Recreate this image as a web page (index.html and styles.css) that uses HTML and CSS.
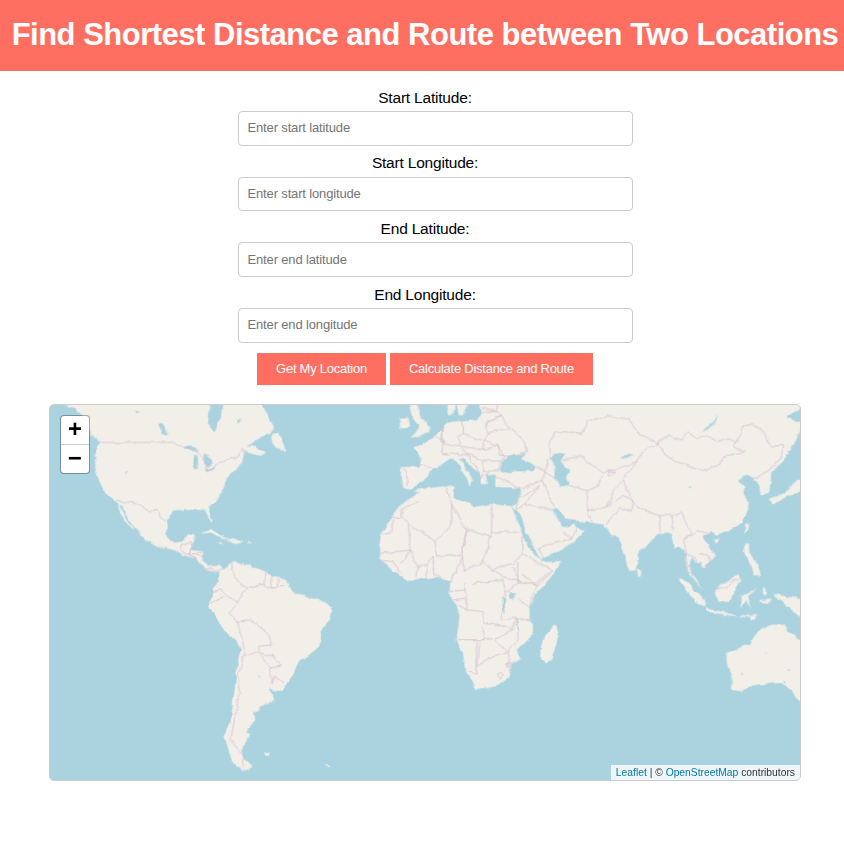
FILE: index.html
```html
<!DOCTYPE html>
<html lang="en">
<head>
<meta charset="utf-8">
<title>Find Shortest Distance and Route</title>
<link rel="stylesheet" href="styles.css">
</head>
<body>
<div class="page">
  <header class="banner"><h1>Find Shortest Distance and Route between Two Locations</h1></header>
  <form class="form">
    <label class="label" for="a">Start Latitude:</label>
    <input class="field" id="a" placeholder="Enter start latitude">
    <label class="label" for="b">Start Longitude:</label>
    <input class="field" id="b" placeholder="Enter start longitude">
    <label class="label" for="c">End Latitude:</label>
    <input class="field" id="c" placeholder="Enter end latitude">
    <label class="label" for="d">End Longitude:</label>
    <input class="field" id="d" placeholder="Enter end longitude">
    <div class="actions">
      <button class="btn" type="button">Get My Location</button>
      <button class="btn" type="button">Calculate Distance and Route</button>
    </div>
  </form>
  <div class="map">
    <svg class="world" viewBox="-873 12 2256 1131" aria-hidden="true">
      <defs>
        <filter id="rough" x="-2%" y="-2%" width="104%" height="104%">
          <feTurbulence type="fractalNoise" baseFrequency="0.035" numOctaves="3" seed="4" result="n"/>
          <feDisplacementMap in="SourceGraphic" in2="n" scale="14" xChannelSelector="R" yChannelSelector="G"/>
          <feGaussianBlur stdDeviation="1.6"/>
        </filter>
      </defs>
      <g class="art">
      <g class="land">
        <!-- North America -->
        <g transform="translate(-900 -15)">
          <polygon points="60,20 100,35 125,65 150,115 175,145 160,180 162,225 185,285 220,318 245,335 270,385 310,430 345,450 400,465 430,480 465,490 490,525 530,530 545,522 535,512 500,515 480,495 488,470 447,465 458,420 440,418 425,440 395,442 375,420 375,378 395,345 440,340 490,340 510,380 514,378 500,340 520,320 545,290 555,250 600,205 612,165 625,172 660,180 675,170 640,150 615,155 650,130 690,110 700,95 660,20"/>
          <polygon points="695,115 715,110 735,165 705,155 690,135"/>
          <polygon points="225,320 240,340 262,385 280,403 270,400 245,370 232,340"/>
        </g>
        <!-- Caribbean -->
        <g transform="translate(-630 300)">
          <polygon points="210,95 240,87 270,105 302,118 275,113 240,100"/>
          <polygon points="290,122 310,114 337,126 315,131 300,126"/>
          <polygon points="260,126 274,127 272,131 262,130"/>
          <polygon points="348,126 360,128 358,131 349,130"/>
          <polygon points="0,78 8,85 3,90"/>
        </g>
        <!-- South America -->
        <g transform="translate(-450 480)">
          <polygon points="85,35 110,20 130,3 145,8 175,15 215,30 245,50 285,60 305,95 345,110 400,125 425,150 420,175 395,205 385,260 350,290 320,310 310,340 285,375 270,395 245,390 235,385 250,425 205,440 205,455 185,460 190,480 165,520 180,530 155,560 150,590 185,625 155,635 125,612 100,530 120,480 130,400 140,310 150,270 135,240 95,205 55,140 65,95 85,60"/>
          <polygon points="220,582 240,578 236,588 224,589"/>
          <polygon points="403,614 416,620 418,626 408,621"/>
          <polygon points="1100,195 1108,225 1085,300 1065,308 1052,295 1055,260 1065,230"/>
        </g>
        <!-- Eurasia and Africa -->
        <polygon points="212,268 190,262 182,235 183,200 240,198 245,172 220,140 250,128 275,112 305,90 318,68 345,62 370,62 415,55 425,40 425,30 420,0 1400,0 1400,14 1345,50 1400,70 1383,96 1360,146 1330,186 1315,201 1295,216 1300,246 1292,276 1268,284 1262,246 1245,231 1225,221 1198,241 1222,254 1210,276 1230,306 1230,326 1212,366 1175,390 1135,405 1118,395 1095,410 1130,465 1095,505 1090,485 1070,490 1060,470 1050,495 1065,525 1090,565 1065,535 1045,510 1040,460 1020,435 1010,445 1000,400 960,400 935,425 900,455 890,510 875,512 860,480 840,415 830,405 815,405 790,372 750,365 712,360 700,372 735,395 700,430 650,455 610,475 605,487 665,483 635,530 590,580 570,620 570,660 580,670 580,705 540,740 535,750 540,775 515,790 510,830 470,860 410,872 400,855 375,800 370,760 350,720 360,650 350,615 330,590 330,545 295,530 195,540 150,505 120,470 120,400 150,360 185,310 240,275 215,272"/>
        <!-- Europe islands -->
        <g transform="translate(180 6)">
          <polygon points="0,48 25,45 28,68 8,80 0,75"/>
          <polygon points="30,0 48,0 60,40 90,72 85,90 35,105 50,85 55,70 40,50"/>
          <polygon points="140,0 165,0 160,35 148,40"/>
          <polygon points="170,0 205,0 190,30 178,38"/>
        </g>
        <polygon points="318,195 330,195 330,215 320,212"/>
        <polygon points="316,218 332,218 330,240 318,240"/>
        <polygon points="350,252 378,250 372,265"/>
        <polygon points="437,272 465,274 462,278 438,276"/>
        <polygon points="510,276 530,272 520,283"/>
        <polygon points="895,505 906,512 908,528 897,530"/>
        <!-- East Asia islands -->
        <g transform="translate(900 6)">
          <polygon points="395,290 440,270 475,235 500,225 500,260 430,290 405,305"/>
        </g>
        <!-- Southeast Asia and Australia -->
        <g transform="translate(960 360)">
          <polygon points="262,12 270,10 266,28 258,36"/>
          <polygon points="165,60 182,55 176,68 166,68"/>
          <polygon points="258,70 272,70 272,100 290,120 305,150 305,165 285,165 275,130 258,100"/>
          <polygon points="58,175 80,180 135,240 140,262 120,255 85,215"/>
          <polygon points="142,265 200,278 240,290 210,286 145,275"/>
          <polygon points="245,287 300,287 282,302 278,292 245,291"/>
          <polygon points="170,208 215,180 240,165 245,180 225,215 215,245 180,245"/>
          <polygon points="250,225 270,217 295,205 268,226 280,265 265,240 250,262"/>
          <polygon points="315,200 322,198 322,225 314,225"/>
          <polygon points="305,240 340,240 335,248 305,246"/>
          <polygon points="345,222 380,230 440,235 440,295 395,265 370,245"/>
          <polygon points="205,400 270,375 300,335 340,315 385,315 385,335 440,365 440,560 385,500 370,490 295,495 245,515 218,510 220,470 205,430"/>
        </g>
      </g>
      <g class="water">
        <polygon points="205,268 255,240 265,215 290,200 325,180 338,172 360,200 385,240 388,258 400,238 360,172 372,172 420,225 425,250 445,250 438,225 470,222 470,260 540,262 545,272 535,310 520,318 450,310 405,320 370,300 340,290 345,260 335,255 245,265 205,276"/>
        <polygon points="480,210 490,180 510,160 535,165 565,155 545,170 590,195 580,212 530,212 490,216"/>
        <polygon points="635,175 650,155 680,160 660,180 690,210 680,230 690,255 660,255 645,225 650,205"/>
        <polygon points="515,318 530,330 545,345 560,395 598,470 612,490 603,480 585,465 555,415 530,350"/>
        <polygon points="640,325 655,328 680,358 712,362 700,372 690,380 670,375"/>
        <polygon points="845,172 870,155 885,160 868,165 850,175"/>
        <polygon points="1090,95 1125,62 1135,38 1130,65 1100,92"/>
        <polygon points="1060,260 1050,258 1052,264"/>
        <g transform="translate(-900 -15)">
          <polygon points="545,10 540,60 520,110 500,85 510,10"/>
          <polygon points="420,158 450,145 475,168 448,160"/>
          <polygon points="455,185 470,180 470,215 458,225"/>
          <polygon points="490,175 515,195 500,215 492,205"/>
          <polygon points="490,225 525,208 520,215 496,228"/>
          <polygon points="350,85 365,80 382,120 365,115"/>
          <polygon points="590,70 605,68 595,80"/>
          <polygon points="280,45 295,48 285,55"/>
          <polygon points="250,228 258,230 254,236"/>
        </g>
        <g transform="translate(-450 480)">
          <polygon points="960,98 976,96 975,115 960,117"/>
          <polygon points="938,110 944,112 948,160 940,150"/>
          <polygon points="977,175 982,178 988,212 982,210"/>
          <polygon points="200,350 207,352 204,358"/>
        </g>
        <g transform="translate(960 360)">
          <polygon points="322,398 328,400 326,405"/>
          <polygon points="388,450 396,450 394,456"/>
          <polygon points="378,482 386,486 380,492"/>
          <polygon points="248,460 254,462 250,466"/>
        </g>
      </g>
      <g class="border">
        <!-- North America -->
        <g transform="translate(-900 -15)">
          <path d="M172 140H395L420 150 470 170 500 200 495 225 545 195 590 185 605 160 615 185"/>
          <path d="M222 315 290 325 325 350 345 345 370 378"/>
        </g>
        <g transform="translate(-630 300)">
          <path d="M148 150 155 130 180 128 175 165M148 150 165 162 195 160 217 155 215 170 195 165M175 165 195 175M205 195 225 210 240 205 262 215"/>
        </g>
        <!-- South America -->
        <g transform="translate(-450 480)">
          <path d="M125 5 122 30 145 70 170 85 220 75 245 85 285 75M240 40 245 85M222 35 220 75M260 55 262 80"/>
          <path d="M165 85 140 130 115 155 135 185 180 178 220 210 240 235 245 255 205 260 205 280 250 290 270 320 240 325 240 375 250 350 280 370"/>
          <path d="M60 95 90 90 110 110 145 130M60 130 100 110M135 185 150 225 160 275 160 285 140 350 145 400 120 540 155 590 155 625"/>
          <path d="M160 285 205 280M205 280 240 325"/>
        </g>
        <!-- Europe -->
        <g transform="translate(180 6)">
          <path d="M0 195 20 205 20 250M60 185 100 195"/>
          <path d="M95 95 130 115 125 150 150 160M125 72 130 115M130 75 125 120 180 130 175 100 190 95 190 50"/>
          <path d="M190 95 255 115 265 90 260 60 262 52M245 30 290 25 305 40 270 55 262 52M250 18 290 25 295 5"/>
          <path d="M260 60 305 40 330 75 265 90M330 75 370 110 385 145 345 160 300 155 295 130 255 115"/>
          <path d="M250 140 295 130 315 160 305 175 250 175 230 165 205 155 180 130M180 130 250 140M255 115 250 140"/>
          <path d="M250 175 255 205 295 205 305 175M200 155 230 195 240 225 255 205M240 225 270 210"/>
          <path d="M125 150 150 150 185 155 205 155"/>
        </g>
        <!-- Middle East / Asia -->
        <path d="M590 195 620 215 610 240 640 310 650 325M470 225 500 245 545 262M545 265 610 240M545 290 600 255 555 310 640 330M540 295 530 335"/>
        <path d="M555 310 535 325M600 445 650 425 700 415 670 395M600 445 610 475M700 415 712 380"/>
        <path d="M635 175 630 130 650 95 730 100 745 60 810 45 870 55 900 100 955 125 915 150 895 185 850 235"/>
        <path d="M660 180 705 170 730 170 790 215 830 205 895 185M690 255 745 270 770 260 790 230M745 270 745 330 800 320 830 265 850 240"/>
        <path d="M740 325 760 365M800 320 850 285 885 300 875 335 845 320 810 360 800 375M850 240 860 260 885 300 900 325 960 345 1000 345 1030 335 1040 365"/>
        <path d="M960 345 965 395M1000 345 1005 395M1040 365 1060 400 1035 420M625 175 620 215 650 230"/>
        <path d="M805 210 830 215 810 225Z"/>
        <g transform="translate(900 6)">
          <path d="M55 118 90 98 130 112 145 85 175 105 210 100 240 118 270 108 295 120 285 130 315 148 300 150 250 165 245 185 190 205 120 180 85 160 55 118"/>
          <path d="M295 120 315 70 345 62 370 85 400 130 435 128 425 165 410 190 385 205 360 225 345 225"/>
        </g>
        <g transform="translate(960 360)">
          <path d="M75 60 100 45 115 30 150 40 135 48 165 100M80 100 105 110 115 130M115 100 150 105 155 125 135 145M75 60 85 130 105 170"/>
          <path d="M170 208 205 205 225 180 240 180"/>
        </g>
        <!-- Africa north -->
        <path d="M320 260 335 310 335 375 285 420 205 370 188 350 150 355M240 300 185 325 185 350M205 370 210 450 160 455 120 460M120 400 150 400 160 360"/>
        <path d="M335 310 375 385 455 412 457 315M457 395H550M285 420 290 470 365 465 380 390M380 390 365 465 375 515 430 485 450 412"/>
        <path d="M432 485 455 510 520 490 550 460 550 395M550 460 600 490 640 510 585 550 540 545 520 500M455 510 490 530 540 545"/>
        <path d="M280 470 280 520 330 545 370 470M230 500 232 530M260 490 262 530M210 450 230 500 260 490 280 470M180 490 210 450M120 480 160 485 180 520"/>
        <!-- Africa south -->
        <g transform="translate(-450 480)">
          <path d="M850 70 940 60 950 100 940 150 935 180 975 175 970 210 940 200 885 190 880 155 830 150 805 135M825 70 830 150M780 95 825 90M790 120 825 115"/>
          <path d="M800 240 885 240 880 200M860 245 862 340 838 335M870 245 865 320 920 285 955 280 915 240M885 240 925 235 970 210"/>
          <path d="M985 235 960 265 955 320M985 115 1020 145M1020 180 975 175M1000 70 1040 75 1020 140M950 100 985 70 1000 70M985 215 985 235"/>
          <path d="M925 345 935 337 942 345 930 357Z"/>
          <path d="M952 315 962 312 962 322 955 324Z"/>
          <path d="M1000 40 1040 75 1085 40M985 70 985 5"/>
        </g>
      </g>
      </g>
      <path class="seam" d="M-873 576H1383"/>
    </svg>
    <div class="zoom">
      <a class="zoom-btn">+</a>
      <a class="zoom-btn">−</a>
    </div>
    <div class="credit"><a>Leaflet</a> | © <a>OpenStreetMap</a> contributors</div>
  </div>
</div>
</body>
</html>
```
FILE: styles.css
```css
html, body {
  margin: 0;
  padding: 0;
  overflow: hidden;
  background: #fff;
  font-family: "Liberation Sans", Arial, sans-serif;
}
.page {
  width: 850px;
}
.banner {
  background: #ff6f61;
  height: 71px;
  padding-bottom: 2px;
  box-sizing: border-box;
  display: flex;
  align-items: center;
  justify-content: center;
}
.banner h1 {
  margin: 0;
  color: #fff;
  font-size: 31px;
  letter-spacing: -.5px;
  font-weight: 700;
  white-space: nowrap;
}
.form {
  width: 375px;
  margin: 17px auto 0;
  display: flex;
  flex-direction: column;
  align-items: flex-start;
}
.label {
  align-self: stretch;
  text-align: center;
  font-size: 15.5px;
  letter-spacing: -.2px;
  line-height: 18px;
  padding-top: .7px;
  margin-bottom: 4.3px;
  color: #000;
}
.field {
  box-sizing: border-box;
  width: 395px;
  flex: none;
  height: 34.7px;
  margin-bottom: 8px;
  padding: 0 9px 1px;
  border: 1px solid #ccc;
  border-radius: 4px;
  font: 13px "Liberation Sans", Arial, sans-serif;
  letter-spacing: -.15px;
}
.field::placeholder {
  color: #757575;
}
.actions {
  align-self: stretch;
  display: flex;
  justify-content: center;
  gap: 4px;
  margin-top: 2px;
}
.btn {
  height: 32px;
  padding: 0 19px;
  border: 0;
  background: #ff6f61;
  color: #fff;
  font: 13px "Liberation Sans", Arial, sans-serif;
  letter-spacing: -.25px;
}
.map {
  position: relative;
  box-sizing: border-box;
  width: 752px;
  height: 377px;
  margin: 19px auto 0;
  border: 1px solid #ccc;
  border-radius: 5px;
  overflow: hidden;
  background: #aad3df;
}
.world {
  display: block;
  width: 750px;
  height: 375px;
}
.art {
  filter: url(#rough);
}
.land polygon {
  fill: #f2efe9;
  stroke: #f2efe9;
  stroke-width: 1;
}
.water polygon {
  fill: #aad3df;
}
.seam {
  fill: none;
  stroke: #c6dcd9;
  stroke-width: 2;
}
.border path {
  fill: none;
  stroke: #d0b9c9;
  stroke-width: 2.2;
  stroke-linejoin: round;
}
.zoom {
  position: absolute;
  top: 10px;
  left: 10px;
  width: 28px;
  border: 1px solid rgba(0, 0, 0, .3);
  border-radius: 4px;
  background: #fff;
  background-clip: padding-box;
}
.zoom-btn {
  display: block;
  height: 28px;
  text-align: center;
  font: 700 24px/30px "Liberation Mono", monospace;
  color: #000;
}
.zoom-btn:first-child {
  border-bottom: 1px solid #ccc;
}
.credit {
  position: absolute;
  right: 0;
  bottom: 0;
  padding: 0 5px;
  background: rgba(255, 255, 255, .8);
  font-size: 10.3px;
  line-height: 15px;
  color: #333;
}
.credit a {
  color: #0078a8;
}
```
